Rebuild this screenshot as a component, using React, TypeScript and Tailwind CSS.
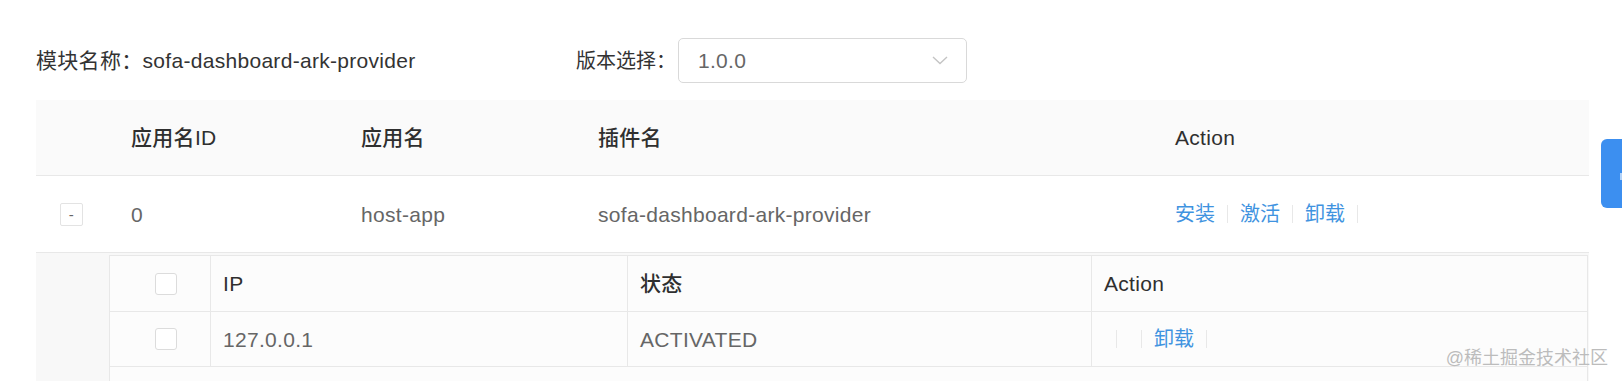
const font = "font-['Liberation_Sans','Noto_Sans_CJK_SC',sans-serif]";

function Divider() {
  return <span className="mx-3 inline-block h-[18px] w-px bg-[#e8e8e8]" />;
}

function ActionLinks({ items }: { items: string[] }) {
  return (
    <div className="flex items-center text-[20px] tracking-normal">
      {items.map((label, i) => (
        <div key={i} className="flex items-center">
          {i > 0 && <Divider />}
          <a className="cursor-pointer text-[#3f93e0]">{label}</a>
        </div>
      ))}
      <Divider />
    </div>
  );
}

function Checkbox() {
  return (
    <span className="inline-block h-[22px] w-[22px] rounded-[3px] border border-[#dcdcdc] bg-white" />
  );
}

function NestedTable() {
  return (
    <div className="border-x border-t border-[#e8e8e8] bg-[#fcfcfc]">
      <div className="grid h-[56px] grid-cols-[101px_417px_464px_1fr] border-b border-[#e8e8e8] font-medium text-[#2f2f2f]">
        <div className="flex items-center justify-center border-r border-[#e8e8e8] pl-3">
          <Checkbox />
        </div>
        <div className="flex items-center border-r border-[#e8e8e8] px-3">IP</div>
        <div className="flex items-center border-r border-[#e8e8e8] px-3">状态</div>
        <div className="flex items-center px-3">Action</div>
      </div>
      <div className="grid h-[55px] grid-cols-[101px_417px_464px_1fr] border-b border-[#e8e8e8] text-[#666]">
        <div className="flex items-center justify-center border-r border-[#e8e8e8] pl-3">
          <Checkbox />
        </div>
        <div className="flex items-center border-r border-[#e8e8e8] px-3">127.0.0.1</div>
        <div className="flex items-center border-r border-[#e8e8e8] px-3">ACTIVATED</div>
        <div className="flex items-center px-3">
          <ActionLinks items={["", "", "卸载"]} />
        </div>
      </div>
      <div className="h-[40px]" />
    </div>
  );
}

export default function App() {
  return (
    <div className={`relative h-[381px] overflow-hidden bg-white text-[21px] leading-none tracking-[0.3px] ${font}`}>
      <div className="pl-[36px] pr-[33px] pt-[38px]">
        <div className="flex h-[45px] items-center">
          <div className="w-[540px] whitespace-nowrap text-[#333]">模块名称：sofa-dashboard-ark-provider</div>
          <div className="flex items-center">
            <span className="w-[102px] whitespace-nowrap text-[20px] tracking-normal text-[#333]">版本选择：</span>
            <div className="flex h-[45px] w-[289px] items-center justify-between rounded-[5px] border border-[#d9d9d9] pl-[19px] pr-[18px] text-[#666]">
              <span>1.0.0</span>
              <svg width="16" height="9" viewBox="0 0 16 9" fill="none">
                <polyline points="1,1 8,7.5 15,1" stroke="#c4c4c4" strokeWidth="1.4" />
              </svg>
            </div>
          </div>
        </div>

        <div className="mt-[17px]">
          <div className="grid h-[76px] grid-cols-[71px_230px_237px_577px_1fr] border-b border-[#e8e8e8] bg-[#fafafa] font-medium text-[#2f2f2f]">
            <div />
            <div className="flex items-center pl-6">应用名ID</div>
            <div className="flex items-center pl-6">应用名</div>
            <div className="flex items-center pl-6">插件名</div>
            <div className="flex items-center pl-6">Action</div>
          </div>
          <div className="grid h-[77px] grid-cols-[71px_230px_237px_577px_1fr] border-b border-[#e8e8e8] text-[#666]">
            <div className="flex items-center justify-center">
              <button className="flex h-[23px] w-[23px] items-center justify-center rounded-[2px] border border-[#e3e3e3] bg-white text-[15px] text-[#666]">
                -
              </button>
            </div>
            <div className="flex items-center pl-6">0</div>
            <div className="flex items-center pl-6">host-app</div>
            <div className="flex items-center pl-6">sofa-dashboard-ark-provider</div>
            <div className="flex items-center pl-6">
              <ActionLinks items={["安装", "激活", "卸载"]} />
            </div>
          </div>
          <div className="bg-[#f8f8f8] pl-[73px] pr-px pt-[2px]">
            <NestedTable />
          </div>
        </div>
      </div>

      <div className="absolute right-0 top-[139px] h-[69px] w-[21px] rounded-l-[6px] bg-[#3c8ff0]">
        <span className="absolute right-0 top-[34px] h-[7px] w-[2px] bg-white/60" />
      </div>

      <div className="pointer-events-none absolute bottom-[14px] right-[14px] text-[18px] tracking-normal text-[#bcbcbc]">
        @稀土掘金技术社区
      </div>
    </div>
  );
}
